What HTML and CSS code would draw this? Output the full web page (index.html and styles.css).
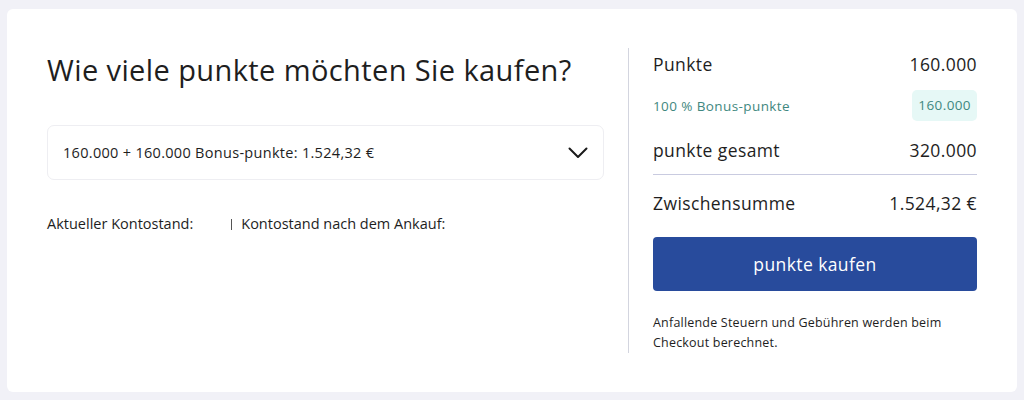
FILE: index.html
```html
<!DOCTYPE html>
<html lang="de">
<head>
    <meta charset="UTF-8">
    <meta name="viewport" content="width=device-width, initial-scale=1.0">
    <title>Punkte kaufen</title>
    <link rel="stylesheet" href="styles.css">
</head>
<body>
<div class="card">
    <div class="left">
        <h1 class="title">Wie viele punkte möchten Sie kaufen?</h1>

        <div class="select">
            <span>160.000 + 160.000 Bonus-punkte: 1.524,32 €</span>
            <svg class="chevron" width="20" height="12" viewBox="0 0 20 12">
                <path d="M1.5 1.5 L10 10 L18.5 1.5" fill="none" stroke="#1a1a1a" stroke-width="2" stroke-linecap="round" stroke-linejoin="round"/>
            </svg>
        </div>

        <div class="balance">
            <span>Aktueller Kontostand:</span>
            <span class="sep"></span>
            <span>Kontostand nach dem Ankauf:</span>
        </div>
    </div>

    <div class="right">
        <div class="row">
            <span>Punkte</span>
            <span>160.000</span>
        </div>
        <div class="row bonus">
            <span>100 % Bonus-punkte</span>
            <span class="badge">160.000</span>
        </div>
        <div class="row total">
            <span>punkte gesamt</span>
            <span>320.000</span>
        </div>
        <div class="row sum">
            <span>Zwischensumme</span>
            <span>1.524,32 €</span>
        </div>
        <button class="buy">punkte kaufen</button>
        <p class="note">Anfallende Steuern und Gebühren werden beim Checkout berechnet.</p>
    </div>
</div>
</body>
</html>
```

FILE: styles.css
```css
html, body {
    margin: 0;
    padding: 0;
}
body {
    background: #f1f1f7;
    padding: 9px 7px 8px 7px;
    font-family: "Open Sans", "Lato", sans-serif;
    color: #1e1e1e;
}
.card {
    width: 1010px;
    height: 383px;
    box-sizing: border-box;
    background: #fff;
    border-radius: 6px;
    padding: 39px 40px 0 40px;
    display: flex;
    gap: 24px;
}
.left {
    width: 557px;
}
.title {
    margin: 4px 0 0 0;
    font-size: 29px;
    line-height: 36px;
    font-weight: 400;
    letter-spacing: 0.4px;
}
.select {
    margin-top: 37px;
    height: 55px;
    box-sizing: border-box;
    border: 1px solid #eeeef2;
    border-radius: 7px;
    padding: 0 15px;
    display: flex;
    justify-content: space-between;
    align-items: center;
    font-size: 14.5px;
    letter-spacing: 0.3px;
}
.chevron {
    display: block;
}
.balance {
    margin-top: 34px;
    font-size: 14.5px;
    line-height: 20px;
    display: flex;
    align-items: center;
}
.balance .sep {
    width: 1px;
    height: 11px;
    background: #555;
    margin-left: 38px;
    margin-right: 9px;
}
.right {
    width: 349px;
    height: 305px;
    box-sizing: border-box;
    border-left: 1px solid #d3d5df;
    padding-left: 24px;
}
.row {
    height: 34px;
    display: flex;
    justify-content: space-between;
    align-items: center;
    font-size: 17.5px;
    letter-spacing: 0.4px;
}
.row:first-child {
    margin-top: -1px;
}
.row.bonus {
    height: 31px;
    margin-top: 9px;
    font-size: 13.5px;
    letter-spacing: 0.4px;
    color: #3f8880;
}
.badge {
    background: #e6f8f6;
    border-radius: 5px;
    height: 31px;
    line-height: 31px;
    padding: 0 6px;
}
.row.total {
    margin-top: 12px;
    height: 34px;
    border-bottom: 1px solid #c9cbe0;
    padding-bottom: 7px;
}
.row.sum {
    margin-top: 11px;
}
.buy {
    display: block;
    width: 100%;
    margin-top: 17px;
    height: 54px;
    border: none;
    border-radius: 4px;
    background: #284b9c;
    color: #fff;
    font-family: inherit;
    font-size: 17.5px;
    letter-spacing: 0.4px;
    cursor: pointer;
}
.note {
    margin: 22px 0 0 0;
    font-size: 12.5px;
    line-height: 20px;
    letter-spacing: 0.2px;
}
```
